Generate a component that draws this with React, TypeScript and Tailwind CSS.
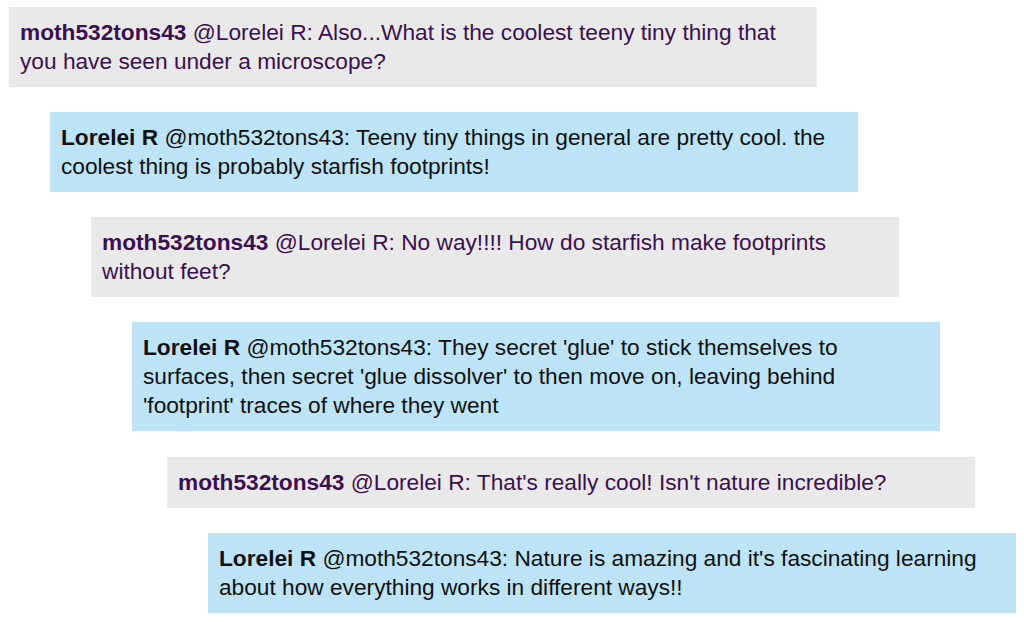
const messages = [
  {
    from: 'moth532tons43',
    to: '@Lorelei R',
    lines: ['Also...What is the coolest teeny tiny thing that', 'you have seen under a microscope?'],
    mine: false,
    indent: 'ml-[9px]',
  },
  {
    from: 'Lorelei R',
    to: '@moth532tons43',
    lines: ['Teeny tiny things in general are pretty cool. the', 'coolest thing is probably starfish footprints!'],
    mine: true,
    indent: 'ml-[50px]',
  },
  {
    from: 'moth532tons43',
    to: '@Lorelei R',
    lines: ['No way!!!! How do starfish make footprints', 'without feet?'],
    mine: false,
    indent: 'ml-[91px]',
  },
  {
    from: 'Lorelei R',
    to: '@moth532tons43',
    lines: [
      "They secret 'glue' to stick themselves to",
      "surfaces, then secret 'glue dissolver' to then move on, leaving behind",
      "'footprint' traces of where they went",
    ],
    mine: true,
    indent: 'ml-[132px]',
  },
  {
    from: 'moth532tons43',
    to: '@Lorelei R',
    lines: ["That's really cool! Isn't nature incredible?"],
    mine: false,
    indent: 'ml-[167px] mt-px',
  },
  {
    from: 'Lorelei R',
    to: '@moth532tons43',
    lines: ["Nature is amazing and it's fascinating learning", 'about how everything works in different ways!!'],
    mine: true,
    indent: 'ml-[208px]',
  },
];

export default function App() {
  return (
    <div className="min-h-[622px] w-[1024px] bg-white pt-[7px] font-['Liberation_Sans',Arial,sans-serif]">
      <div className="flex flex-col gap-[25px]">
        {messages.map((m, i) => (
          <div
            key={i}
            className={`${m.indent} w-[808px] px-[11px] py-[11px] text-[22.7px] leading-[29px] whitespace-nowrap ${
              m.mine ? 'bg-[#bde3f6] text-[#111111]' : 'bg-[#e9e9e9] text-[#3b1050]'
            }`}
          >
            {m.lines.map((line, j) => (
              <div key={j}>
                {j === 0 && (
                  <>
                    <span className="font-bold">{m.from}</span> {m.to}:{' '}
                  </>
                )}
                {line}
              </div>
            ))}
          </div>
        ))}
      </div>
    </div>
  );
}
